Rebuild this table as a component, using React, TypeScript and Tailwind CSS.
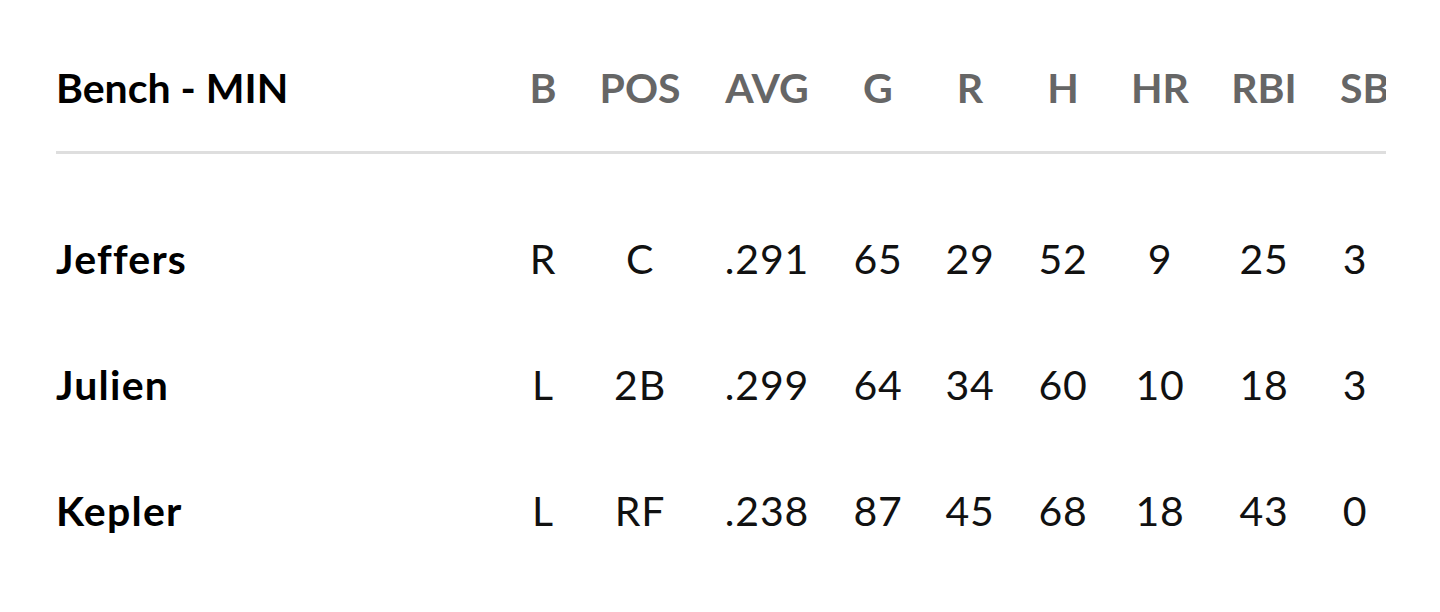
import React from 'react';

const cols = ['B', 'POS', 'AVG', 'G', 'R', 'H', 'HR', 'RBI', 'SB'];

const rows = [
  { name: 'Jeffers', stats: ['R', 'C', '.291', '65', '29', '52', '9', '25', '3'] },
  { name: 'Julien', stats: ['L', '2B', '.299', '64', '34', '60', '10', '18', '3'] },
  { name: 'Kepler', stats: ['L', 'RF', '.238', '87', '45', '68', '18', '43', '0'] },
];

const grid =
  'grid grid-cols-[447px_80px_114px_140px_82px_102px_84px_110px_98px_84px] items-center';

export default function App() {
  return (
    <div className="w-[1440px] h-[612px] bg-white px-14 pt-[25px] font-['Lato',sans-serif] text-[41px]">
      <div className="w-[1330px] overflow-hidden">
        <div className={`${grid} h-[126px] w-[1341px]`}>
          <div className="font-bold text-black">Bench - MIN</div>
          {cols.map((c) => (
            <div
              key={c}
              className={
                c === 'SB'
                  ? 'font-bold text-[#666666] text-left pl-[27px] whitespace-nowrap'
                  : 'font-bold text-[#666666] text-center'
              }
            >
              {c}
            </div>
          ))}
        </div>
        <div className="h-[3px] bg-[#dedede] w-[1330px]" />
        <div className="mt-[42px] w-[1341px]">
          {rows.map((r) => (
            <div key={r.name} className={`${grid} h-[126px]`}>
              <div className="font-bold text-black tracking-[0.03em]">{r.name}</div>
              {r.stats.map((s, i) => (
                <div key={i} className="text-center text-[#111111] tracking-[0.02em]">
                  {s}
                </div>
              ))}
            </div>
          ))}
        </div>
      </div>
    </div>
  );
}
